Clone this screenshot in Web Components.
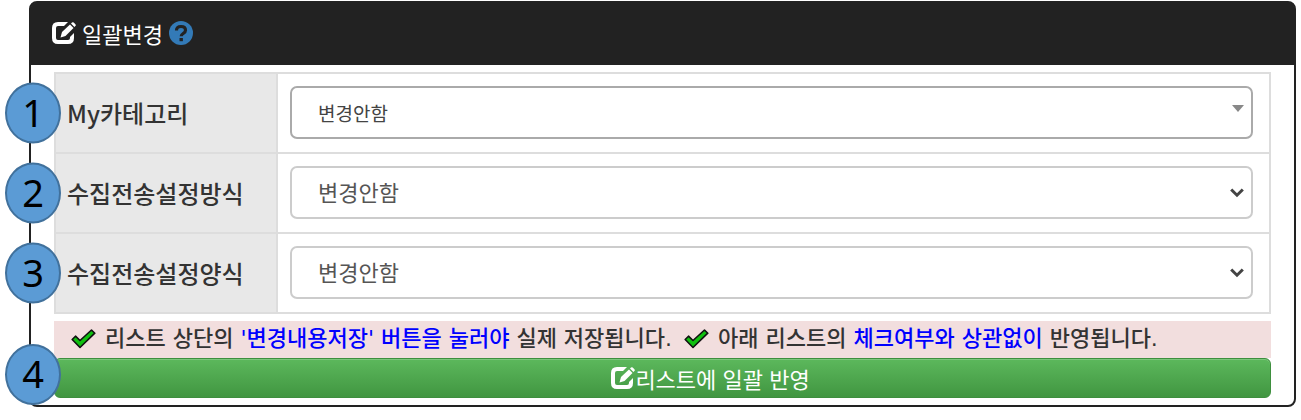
<!DOCTYPE html>
<html lang="ko">
<head>
<meta charset="utf-8">
<meta name="viewport" content="width=device-width, initial-scale=1">
<title>일괄변경</title>
<style>
    body {
        margin: 0;
        padding: 1px 5px 0 29px;
        background: #fff;
        color: #333;
        font: 22px/30px "Noto Sans CJK KR", "Noto Sans", sans-serif;
    }
</style>
</head>
<body>
<bulk-panel>
    <ui-icon slot="title" name="edit"></ui-icon>
    <span slot="title">일괄변경</span>
    <ui-icon slot="title" name="help"></ui-icon>
    <bulk-form></bulk-form>
    <notice-bar>
        <notice-item>리스트 상단의 <b>'변경내용저장' 버튼을 눌러야</b> 실제 저장됩니다.</notice-item>
        <notice-item>아래 리스트의 <b>체크여부와 상관없이</b> 반영됩니다.</notice-item>
    </notice-bar>
    <apply-button step="4">리스트에 일괄 반영</apply-button>
</bulk-panel>

<script>
const ICONS = {
    edit: `<svg width="24" height="22" viewBox="0 0 24 22" fill="currentColor">
        <path d="M16 0H6Q0 0 0 6v10q0 6 6 6h10q6 0 6-6v-5l-4 4v1q0 2-2 2H6q-2 0-2-2V6q0-2 2-2h6z"/>
        <path d="M8.500 15.500l1.500-5.500 8-7.500 3.500 3.500-8 8z"/>
        <path d="M19 1.500L20 .6q.8-.8 1.700 0l1.700 1.700q.8.8 0 1.700l-1 1z"/>
    </svg>`,
    help: `<svg width="24" height="24" viewBox="0 0 24 24">
        <circle cx="12" cy="12" r="12" fill="#337ab7"/>
        <path d="M7.500 9.500Q7.500 5.500 12 5.500t4.500 3.700c0 3.300-4.300 3.300-4.300 6" fill="none" stroke="#222" stroke-width="3.200"/>
        <path d="M10.500 17h3.400v3.200h-3.400z" fill="#222"/>
    </svg>`,
    check: `<svg width="25" height="20" viewBox="0 0 25 20">
        <path d="M1.200 10.500l3.300-3.300 4.500 4.300L20.500 1l3.300 3.200L9 18.500z" fill="#10c010" stroke="#111" stroke-width="1.600" stroke-linejoin="round"/>
    </svg>`,
    triangle: `<svg width="12" height="7" viewBox="0 0 12 7"><path d="M0 0h12L6 7z" fill="#888"/></svg>`,
    chevron: `<svg width="14" height="10" viewBox="0 0 14 10">
        <path d="M1.200 1.500L7 7.200l5.800-5.700" fill="none" stroke="#444" stroke-width="3"/>
    </svg>`
};

class UiIcon extends HTMLElement {
    connectedCallback() {
        this.attachShadow({ mode: 'open' }).innerHTML = `
            <style>
                :host { display: inline-flex; flex: none; }
                svg { display: block; }
            </style>
            ${ICONS[this.getAttribute('name')]}
        `;
    }
}

// Numbered marker that hangs over the left edge of its row
class StepBadge extends HTMLElement {
    connectedCallback() {
        this.attachShadow({ mode: 'open' }).innerHTML = `
            <style>
                :host {
                    display: flex;
                    align-items: center;
                    justify-content: center;
                    box-sizing: border-box;
                    width: 56px;
                    height: 61px;
                    padding-bottom: 4px;
                    border: 2px solid #41719c;
                    border-radius: 50%;
                    background: #5b9bd5;
                    color: #000;
                    font: 38px/48px "Noto Sans", sans-serif;
                }
            </style>
            <slot></slot>
        `;
    }
}

class BulkPanel extends HTMLElement {
    connectedCallback() {
        this.attachShadow({ mode: 'open' }).innerHTML = `
            <style>
                :host {
                    display: block;
                    border: 2px solid #222;
                    border-radius: 8px;
                    background: #fff;
                }
                header {
                    display: flex;
                    align-items: center;
                    gap: 6px;
                    padding: 15px 21px 17px;
                    background: #222;
                    color: #fff;
                    border-radius: 4px 4px 0 0;
                }
                .body { padding: 7px 23px; }
            </style>
            <header><slot name="title"></slot></header>
            <div class="body"><slot></slot></div>
        `;
    }
}

class BulkForm extends HTMLElement {
    constructor() {
        super();
        this.attachShadow({ mode: 'open' });
        this.fields = [
            { id: 'category', label: 'My카테고리', icon: 'triangle' },
            { id: 'method', label: '수집전송설정방식', icon: 'chevron' },
            { id: 'template', label: '수집전송설정양식', icon: 'chevron' }
        ];
    }

    connectedCallback() {
        this.shadowRoot.innerHTML = `
            <style>
                :host { display: block; margin-bottom: 7px; }
                table { width: 100%; border-collapse: collapse; }
                th, td { border: 2px solid #ddd; height: 53px; }
                th {
                    position: relative;
                    width: 197px;
                    padding: 0 12px 0 11px;
                    background: #e8e8e8;
                    font-size: 24px;
                    font-weight: 500;
                    text-align: left;
                    white-space: nowrap;
                }
                td { padding: 12px 16px 13px 12px; }
                step-badge {
                    position: absolute;
                    left: -51px;
                    top: 50%;
                    transform: translateY(-50%);
                }
                .field { display: grid; align-items: center; }
                .field > * { grid-area: 1 / 1; }
                .field ui-icon {
                    justify-self: end;
                    margin-right: 9px;
                    pointer-events: none;
                }
                select {
                    appearance: none;
                    width: 100%;
                    height: 53px;
                    padding: 0 26px 3px;
                    border: 2px solid #ccc;
                    border-radius: 7px;
                    background: #fff;
                    color: #555;
                    font: inherit;
                }
                .triangle select {
                    padding-bottom: 0;
                    border-color: #aaa;
                    color: #444;
                    font-size: 19px;
                }
                .triangle ui-icon { margin-bottom: 8px; }
            </style>
            <table>
                ${this.fields.map((f, i) => `
                <tr>
                    <th scope="row"><label for="${f.id}">${f.label}</label><step-badge>${i + 1}</step-badge></th>
                    <td>
                        <div class="field ${f.icon}">
                            <select id="${f.id}"><option>변경안함</option></select>
                            <ui-icon name="${f.icon}"></ui-icon>
                        </div>
                    </td>
                </tr>`).join('')}
            </table>
        `;
    }
}

class NoticeBar extends HTMLElement {
    connectedCallback() {
        this.attachShadow({ mode: 'open' }).innerHTML = `
            <style>
                :host {
                    display: flex;
                    flex-wrap: wrap;
                    gap: 0 12px;
                    padding: 3px 17px 4px;
                    background: #f2dede;
                    font-family: "DejaVu Sans", "Noto Sans CJK KR", sans-serif;
                    font-weight: 500;
                }
            </style>
            <slot></slot>
        `;
    }
}

class NoticeItem extends HTMLElement {
    connectedCallback() {
        this.attachShadow({ mode: 'open' }).innerHTML = `
            <style>
                :host { display: flex; align-items: center; gap: 9px; }
                ::slotted(b) { color: #00f; font-weight: 500; }
            </style>
            <ui-icon name="check"></ui-icon>
            <span><slot></slot></span>
        `;
    }
}

class ApplyButton extends HTMLElement {
    connectedCallback() {
        this.attachShadow({ mode: 'open' }).innerHTML = `
            <style>
                :host { display: block; position: relative; }
                button {
                    display: flex;
                    align-items: center;
                    justify-content: center;
                    width: 100%;
                    height: 40px;
                    padding: 0 0 0 96px;
                    border: 1px solid #3e8f3e;
                    border-radius: 6px;
                    background: linear-gradient(#5cb85c, #419641);
                    box-shadow: inset 0 1px 0 #7cc67c;
                    color: #fff;
                    font: inherit;
                    cursor: pointer;
                }
                step-badge { position: absolute; left: -49px; bottom: -7px; }
            </style>
            <button type="button"><ui-icon name="edit"></ui-icon><slot></slot></button>
            <step-badge>${this.getAttribute('step')}</step-badge>
        `;
    }
}

customElements.define('ui-icon', UiIcon);
customElements.define('step-badge', StepBadge);
customElements.define('bulk-panel', BulkPanel);
customElements.define('bulk-form', BulkForm);
customElements.define('notice-bar', NoticeBar);
customElements.define('notice-item', NoticeItem);
customElements.define('apply-button', ApplyButton);
</script>
</body>
</html>
